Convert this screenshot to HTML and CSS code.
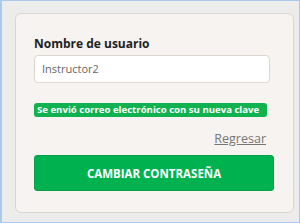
FILE: index.html
```html
<!DOCTYPE html>
<html lang="es">
<head>
<meta charset="utf-8">
<link rel="stylesheet" href="styles.css">
</head>
<body>
<div class="frame">
  <div class="card">
    <label class="label" for="user">Nombre de usuario</label>
    <div class="input" id="user">Instructor2</div>
    <div class="notice">Se envió correo electrónico con su nueva clave</div>
    <div class="back-row"><a class="back" href="#">Regresar</a></div>
    <button class="btn">CAMBIAR CONTRASEÑA</button>
  </div>
</div>
</body>
</html>
```

FILE: styles.css
```css
html, body {
  margin: 0;
  padding: 0;
}
body {
  width: 300px;
  height: 224px;
  font-family: "Open Sans", "Noto Sans", sans-serif;
  background: #ffffff;
}
.frame {
  box-sizing: border-box;
  width: 300px;
  height: 223px;
  border: 1px solid #a9c9ee;
  border-left-width: 2px;
  background: #ececec;
  padding: 12px 5px 0 13px;
}
.card {
  box-sizing: border-box;
  width: 279px;
  height: 200px;
  background: #f6f3f0;
  border: 1px solid #ddd6ce;
  border-radius: 6px;
  padding: 22px 21px 0 18px;
  display: flex;
  flex-direction: column;
}
.label {
  font-weight: 700;
  font-size: 12px;
  line-height: 16px;
  color: #222;
  margin-bottom: 3px;
}
.input {
  box-sizing: border-box;
  height: 28px;
  width: 236px;
  background: #fff;
  border: 1px solid #ddd6ce;
  border-radius: 4px;
  padding: 0 7px;
  font-size: 11px;
  line-height: 26px;
  color: #666;
}
.notice {
  align-self: flex-start;
  margin-top: 20px;
  height: 14px;
  padding: 0 3px;
  width: 233px;
  box-sizing: border-box;
  background: #10b14f;
  color: #fff;
  font-weight: 700;
  font-size: 9.6px;
  line-height: 14px;
  border-radius: 3px;
  white-space: nowrap;
}
.back-row {
  display: flex;
  justify-content: flex-end;
  margin-top: 14px;
  padding-right: 6px;
}
.back {
  font-size: 12.5px;
  line-height: 16px;
  color: #777;
  text-decoration: underline;
}
.btn {
  margin-top: 8px;
  width: 240px;
  height: 36px;
  background: #00b14f;
  border: 1px solid #0a9e47;
  border-radius: 3px;
  color: #fff;
  font-family: "Open Sans", "Noto Sans", sans-serif;
  font-weight: 700;
  font-size: 11.5px;
  padding: 0;
}
```
